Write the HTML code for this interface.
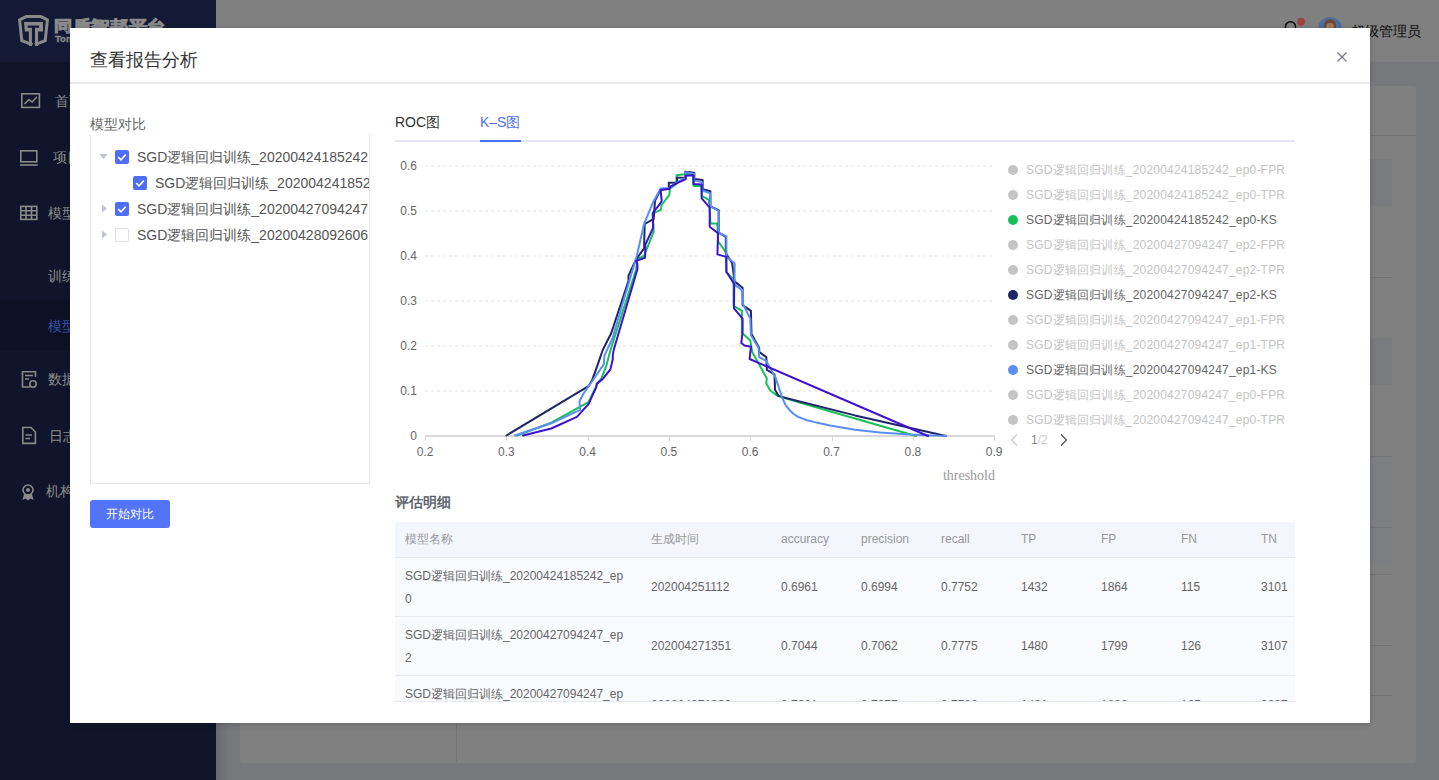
<!DOCTYPE html>
<html><head><meta charset="utf-8">
<style>
*{margin:0;padding:0;box-sizing:border-box}
html,body{width:1439px;height:780px;overflow:hidden;background:#77787c;font-family:"Liberation Sans",sans-serif;position:relative}
.a{position:absolute}
.t{position:absolute;white-space:nowrap;line-height:1}
#side{left:0;top:0;width:216px;height:780px;background:#10152b}
#logo{left:0;top:0;width:216px;height:62px;background:#141a36}
#hdr{left:216px;top:0;width:1223px;height:62px;background:#808080}
#card{left:240px;top:86px;width:1176px;height:677px;background:#808080;border-radius:3px}
#modal{left:70px;top:28px;width:1300px;height:695px;background:#fff;box-shadow:0 1px 6px rgba(0,0,0,.2)}
.mi{color:#8c8c8c;font-size:14px}
.cb{position:absolute;width:14px;height:14px;border-radius:2px;background:#4e6ef5}
.cb svg{position:absolute;left:0;top:0}
.cbe{position:absolute;width:14px;height:14px;border-radius:2px;border:1px solid #dcdfe6;background:#fff}
.tr{font-size:14px;color:#555}
.lg{font-size:12px;color:#c4c4c4;letter-spacing:0.2px}
.dot{position:absolute;width:10px;height:10px;border-radius:5px;background:#c4c4c4}
.th{font-size:12px;color:#999}
.td{font-size:12px;color:#666}
svg text{font-family:"Liberation Sans",sans-serif}
</style></head>
<body>
<div id="side" class="a"></div>
<div id="logo" class="a"></div>

<svg class="a" style="left:0;top:0" width="216" height="780" viewBox="0 0 216 780">
 <g fill="none" stroke="#8a8a8a" stroke-width="3" stroke-linejoin="miter">
  <path d="M32.5,44.6 L21.8,40.6 L19.6,19.8 L26.2,16.6 L40.8,16.6 L47.4,19.8 L45.2,40.6 L34.8,44.6"/>
 </g>
 <path fill="#8a8a8a" d="M24,22 L43,22 L43,31.5 L38.1,31.5 L38.1,46 L35,46 L35,27.7 L39.1,27.7 L39.1,25.4 L27.6,25.4 L27.6,27.7 L31.9,27.7 L31.9,46 L28.9,46 L28.9,31.5 L24.8,31.5 Z"/>
 <g fill="none" stroke="#8a8a8a" stroke-width="1.6">
  <rect x="21.8" y="93.8" width="17.6" height="13.6"/>
  <path d="M24.5,104 L29,99.5 L32,102 L37,97"/>
  <rect x="20.8" y="150.8" width="16" height="11"/>
  <path d="M20,165 L37.7,165"/>
  <rect x="20.8" y="206.4" width="16" height="13"/>
  <path d="M20.8,210.8 L36.8,210.8 M20.8,215.2 L36.8,215.2 M26,206.4 L26,219.4 M31.5,206.4 L31.5,219.4"/>
  <path d="M35.5,377 L35.5,371.8 L22.5,371.8 L22.5,387 L30,387 M25,375.5 L33,375.5 M25,379 L29,379"/>
  <circle cx="33" cy="384" r="3.2"/>
  <path d="M22.8,427.5 L31,427.5 L35.4,432 L35.4,443.4 L22.8,443.4 Z M25.5,435 L32,435 M25.5,438.5 L30,438.5"/>
  <circle cx="28" cy="490" r="5"/>
 </g>
 <circle cx="28" cy="490" r="2" fill="#8a8a8a"/>
 <path d="M24,494 L22.5,500 L25.5,498.5 L28,500.5 L30.5,498.5 L33.5,500 L32,494" fill="#8a8a8a"/>
 <text transform="translate(54,30.5) scale(1,0.82)" x="0" y="0" font-size="18" font-weight="bold" fill="#8a8a8a" stroke="#8a8a8a" stroke-width="1.1" letter-spacing="1.2">同盾智邦平台</text>
 <text x="55" y="42" font-size="9.5" font-weight="bold" fill="#8a8a8a" stroke="#8a8a8a" stroke-width="0.4">Tongdun</text>
</svg>
<div class="a" style="left:0;top:300px;width:216px;height:50px;background:#0d1126"></div>
<div class="t mi" style="left:55px;top:94px">首页</div>
<div class="t mi" style="left:53px;top:150px">项目</div>
<div class="t mi" style="left:48px;top:206px">模型</div>
<div class="t mi" style="left:48px;top:269px">训练</div>
<div class="t mi" style="left:48px;top:319px;color:#3553a8">模型</div>
<div class="t mi" style="left:48px;top:372px">数据</div>
<div class="t mi" style="left:49px;top:429px">日志</div>
<div class="t mi" style="left:46px;top:484px">机构</div>
<div class="a" style="left:216px;top:0;width:14px;height:780px;background:linear-gradient(to right,rgba(0,0,0,.12),rgba(0,0,0,0))"></div>

<div id="hdr" class="a"></div>

<svg class="a" style="left:1280px;top:16px" width="30" height="20"><path d="M5.5,13 L5.5,10.5 A5,4.8 0 0 1 15.5,10.5 L15.5,13" fill="none" stroke="#0a0a0a" stroke-width="1.5"/><circle cx="21" cy="5.7" r="4" fill="#9b4242"/></svg>
<div class="a" style="left:1318px;top:17px;width:24px;height:24px;border-radius:12px;background:#4f6d9c;overflow:hidden"><div class="a" style="left:6px;top:2px;width:12px;height:14px;border-radius:6px 6px 4px 4px;background:#6b4a3a"></div><div class="a" style="left:8px;top:6px;width:8px;height:10px;border-radius:4px;background:#a07860"></div></div>
<div class="t" style="left:1351px;top:24px;font-size:14px;color:#0d0d0d">超级管理员</div>

<div id="card" class="a"></div>

<div class="a" style="left:240px;top:135px;width:1176px;height:1px;background:#747477"></div>
<div class="a" style="left:456px;top:135px;width:1px;height:627px;background:#747477"></div>
<div class="a" style="left:1200px;top:159px;width:192px;height:47px;background:#7a7b7f"></div>
<div class="a" style="left:1200px;top:277px;width:192px;height:1px;background:#747477"></div>
<div class="a" style="left:1200px;top:338px;width:192px;height:47px;background:#7a7b7f"></div>
<div class="a" style="left:1200px;top:456px;width:192px;height:107px;background:#7e7f82"></div>
<div class="a" style="left:1200px;top:456px;width:192px;height:1px;background:#747477"></div>
<div class="a" style="left:1200px;top:527px;width:192px;height:1px;background:#747477"></div>
<div class="a" style="left:1200px;top:574px;width:192px;height:1px;background:#747477"></div>
<div class="a" style="left:1200px;top:645px;width:192px;height:1px;background:#747477"></div>
<div class="a" style="left:1200px;top:695px;width:192px;height:1px;background:#747477"></div>

<div id="modal" class="a"></div>
<div class="t" style="left:90px;top:51px;font-size:18px;color:#333">查看报告分析</div>
<svg class="a" style="left:1337px;top:52px" width="10" height="10"><path d="M0.5,0.5 L9.5,9.5 M9.5,0.5 L0.5,9.5" stroke="#6f7480" stroke-width="1.1"/></svg>
<div class="a" style="left:70px;top:82px;width:1300px;height:2px;background:#e9e9e9"></div>

<div class="t" style="left:90px;top:117px;font-size:14px;color:#666">模型对比</div>
<div class="a" style="left:90px;top:134px;width:280px;height:350px;border:1px solid #e5e5e5;border-top:none"></div>

<div class="a" style="left:91px;top:134px;width:278px;height:349px;overflow:hidden">
 <svg class="a" style="left:8px;top:19px" width="9" height="7"><path d="M0.5,1 L8.5,1 L4.5,6z" fill="#c0c4cc"/></svg>
 <div class="cb" style="left:24px;top:16px"><svg width="14" height="14"><path d="M3.2,7.2 L6,9.8 L10.8,4.6" stroke="#fff" stroke-width="1.6" fill="none"/></svg></div>
 <div class="t tr" style="left:46px;top:16px">SGD逻辑回归训练_20200424185242</div>
 <div class="cb" style="left:42px;top:42px"><svg width="14" height="14"><path d="M3.2,7.2 L6,9.8 L10.8,4.6" stroke="#fff" stroke-width="1.6" fill="none"/></svg></div>
 <div class="t tr" style="left:64px;top:42px">SGD逻辑回归训练_20200424185242_ep0</div>
 <svg class="a" style="left:10px;top:70px" width="7" height="9"><path d="M1,0.5 L6,4.5 L1,8.5z" fill="#c0c4cc"/></svg>
 <div class="cb" style="left:24px;top:68px"><svg width="14" height="14"><path d="M3.2,7.2 L6,9.8 L10.8,4.6" stroke="#fff" stroke-width="1.6" fill="none"/></svg></div>
 <div class="t tr" style="left:46px;top:68px">SGD逻辑回归训练_20200427094247</div>
 <svg class="a" style="left:10px;top:96px" width="7" height="9"><path d="M1,0.5 L6,4.5 L1,8.5z" fill="#c0c4cc"/></svg>
 <div class="cbe" style="left:24px;top:94px"></div>
 <div class="t tr" style="left:46px;top:94px">SGD逻辑回归训练_20200428092606</div>
</div>

<div class="a" style="left:90px;top:500px;width:80px;height:28px;border-radius:3px;background:#5474f7;color:#fff;font-size:12px;line-height:28px;text-align:center">开始对比</div>

<div class="t" style="left:395px;top:115px;font-size:14px;color:#333">ROC图</div>
<div class="t" style="left:480px;top:115px;font-size:14px;color:#4e6ef5">K–S图</div>
<div class="a" style="left:395px;top:140px;width:900px;height:2px;background:#e1e5f0"></div>
<div class="a" style="left:480px;top:140px;width:41px;height:2px;background:#4e6ef5"></div>

<svg class="a" style="left:0;top:0" width="1439" height="780" viewBox="0 0 1439 780">
<g><line x1="425" y1="391" x2="995" y2="391" stroke="#e3e3e3" stroke-width="1" stroke-dasharray="3 3"/>
<line x1="425" y1="346" x2="995" y2="346" stroke="#e3e3e3" stroke-width="1" stroke-dasharray="3 3"/>
<line x1="425" y1="301" x2="995" y2="301" stroke="#e3e3e3" stroke-width="1" stroke-dasharray="3 3"/>
<line x1="425" y1="256" x2="995" y2="256" stroke="#e3e3e3" stroke-width="1" stroke-dasharray="3 3"/>
<line x1="425" y1="211" x2="995" y2="211" stroke="#e3e3e3" stroke-width="1" stroke-dasharray="3 3"/>
<line x1="425" y1="166" x2="995" y2="166" stroke="#e3e3e3" stroke-width="1" stroke-dasharray="3 3"/>
</g>
<g><line x1="425" y1="436" x2="995" y2="436" stroke="#d9d9d9" stroke-width="2"/>
<line x1="425.5" y1="436" x2="425.5" y2="441" stroke="#d9d9d9" stroke-width="1"/>
<line x1="506.5" y1="436" x2="506.5" y2="441" stroke="#d9d9d9" stroke-width="1"/>
<line x1="588.5" y1="436" x2="588.5" y2="441" stroke="#d9d9d9" stroke-width="1"/>
<line x1="669.5" y1="436" x2="669.5" y2="441" stroke="#d9d9d9" stroke-width="1"/>
<line x1="750.5" y1="436" x2="750.5" y2="441" stroke="#d9d9d9" stroke-width="1"/>
<line x1="832.5" y1="436" x2="832.5" y2="441" stroke="#d9d9d9" stroke-width="1"/>
<line x1="913.5" y1="436" x2="913.5" y2="441" stroke="#d9d9d9" stroke-width="1"/>
<line x1="994.5" y1="436" x2="994.5" y2="441" stroke="#d9d9d9" stroke-width="1"/>
</g>
<g font-size="12" fill="#666"><text x="425.0" y="456" text-anchor="middle">0.2</text>
<text x="506.3" y="456" text-anchor="middle">0.3</text>
<text x="587.6" y="456" text-anchor="middle">0.4</text>
<text x="668.9" y="456" text-anchor="middle">0.5</text>
<text x="750.2" y="456" text-anchor="middle">0.6</text>
<text x="831.5" y="456" text-anchor="middle">0.7</text>
<text x="912.8" y="456" text-anchor="middle">0.8</text>
<text x="994.1" y="456" text-anchor="middle">0.9</text>
<text x="417" y="440.3" text-anchor="end">0</text>
<text x="417" y="395.3" text-anchor="end">0.1</text>
<text x="417" y="350.3" text-anchor="end">0.2</text>
<text x="417" y="305.3" text-anchor="end">0.3</text>
<text x="417" y="260.3" text-anchor="end">0.4</text>
<text x="417" y="215.3" text-anchor="end">0.5</text>
<text x="417" y="170.3" text-anchor="end">0.6</text>
</g>
<text x="995" y="480" text-anchor="end" font-size="14" fill="#999" style="font-family:'Liberation Serif',serif">threshold</text>
<g fill="none" stroke-width="2" stroke-linejoin="round" stroke-linecap="round">
<polyline points="517.0,435.5 551.3,422.7 588.5,402.2 597.4,383.6 601.3,378.5 606.4,365.6 610.5,350.0 636.2,269.2 637.4,259.0 644.0,256.0 653.7,231.7 652.4,213.7 660.8,209.9 661.7,205.0 669.4,194.7 669.9,188.7 676.5,183.6 676.5,175.3 684.2,174.2 686.0,173.8 693.0,174.6 693.0,184.5 694.0,186.0 701.2,186.0 701.7,195.8 708.8,199.9 709.7,206.9 710.4,223.6 717.4,223.6 718.1,241.5 725.8,251.8 726.4,272.3 733.5,279.4 733.6,305.8 741.9,310.9 741.9,332.7 750.3,340.4 752.2,351.9 758.6,363.5 766.8,378.5 766.3,383.6 770.4,390.8 777.6,395.9 801.2,403.1 855.0,418.5 916.0,436.0" stroke="#16c257"/>
<polyline points="506.4,435.5 588.5,386.2 592.3,379.7 597.4,365.6 602.6,350.3 611.2,333.3 628.5,280.8 628.5,275.6 635.5,260.3 644.1,248.3 644.7,224.0 653.7,218.8 655.0,200.9 660.6,189.6 668.8,189.1 668.8,182.7 677.1,182.4 677.1,177.8 685.3,177.6 685.3,171.7 694.3,172.7 694.3,179.1 702.7,179.9 702.7,189.1 710.4,191.2 710.4,206.3 718.7,210.1 718.7,232.6 725.8,237.0 725.8,253.1 732.2,263.3 734.5,281.4 742.6,287.8 742.6,305.1 750.9,310.9 751.5,334.0 759.2,348.1 759.2,351.9 766.3,357.1 766.9,369.9 774.5,374.4 775.0,389.7 778.6,395.9 785.8,398.0 855.0,415.4 946.0,436.0" stroke="#1e2667"/>
<polyline points="514.7,435.5 551.3,423.3 580.1,409.9 579.5,401.5 583.3,393.8 592.3,381.0 603.8,364.4 604.5,355.4 612.4,338.5 636.8,255.8 644.1,224.0 653.1,202.2 660.6,188.6 669.0,188.1 676.2,183.0 685.3,177.6 685.3,172.2 694.2,173.7 694.2,180.4 702.4,182.4 702.4,190.6 710.1,193.2 710.4,206.3 718.7,210.8 718.7,232.6 726.4,236.4 726.4,256.9 734.7,263.3 734.4,284.6 742.6,290.4 742.6,303.2 750.3,318.6 750.9,335.3 758.6,348.1 759.2,357.1 766.3,360.9 775.5,377.4 779,388 782.7,399.0 785.5,404.8 788.8,409.2 793,413.5 798.1,416.9 807,420.2 816.5,422.6 830,425.6 855.0,429.8 880,432.4 910,434.6 946.0,436.0" stroke="#5b8ef5"/>
<polyline points="523.0,435.5 551.3,428.5 576.9,416.9 588.5,404.1 596.2,387.4 596.8,383.6 602.6,379.1 610.3,369.5 612.8,359.2 612.8,355.4 613.7,350.0 637.4,269.2 637.4,264.1 636.2,260.9 645.1,257.7 645.4,244.5 653.1,227.8 653.1,212.4 659.5,204.7 661.7,200.9 660.6,190.1 669.4,188.8 670.4,186.5 677.6,182.9 685.8,179.1 685.6,175.8 693.5,175.3 693.7,184.0 701.7,184.5 701.7,198.3 709.7,207.6 709.7,226.8 718.1,233.2 717.4,254.4 726.4,256.9 726.4,271.7 734.2,284.0 734.0,308.3 742.6,318.6 742.6,331.4 741.3,343.0 744.5,345.5 750.9,346.8 749.6,359.0 928.0,436.0" stroke="#3d12cf"/>
</g>
</svg>
<div class="dot" style="left:1008px;top:165px;background:#c4c4c4"></div><div class="t lg" style="left:1026px;top:164px;color:#c4c4c4">SGD逻辑回归训练_20200424185242_ep0-FPR</div>
<div class="dot" style="left:1008px;top:190px;background:#c4c4c4"></div><div class="t lg" style="left:1026px;top:189px;color:#c4c4c4">SGD逻辑回归训练_20200424185242_ep0-TPR</div>
<div class="dot" style="left:1008px;top:215px;background:#16c257"></div><div class="t lg" style="left:1026px;top:214px;color:#666">SGD逻辑回归训练_20200424185242_ep0-KS</div>
<div class="dot" style="left:1008px;top:240px;background:#c4c4c4"></div><div class="t lg" style="left:1026px;top:239px;color:#c4c4c4">SGD逻辑回归训练_20200427094247_ep2-FPR</div>
<div class="dot" style="left:1008px;top:265px;background:#c4c4c4"></div><div class="t lg" style="left:1026px;top:264px;color:#c4c4c4">SGD逻辑回归训练_20200427094247_ep2-TPR</div>
<div class="dot" style="left:1008px;top:290px;background:#1e2667"></div><div class="t lg" style="left:1026px;top:289px;color:#666">SGD逻辑回归训练_20200427094247_ep2-KS</div>
<div class="dot" style="left:1008px;top:315px;background:#c4c4c4"></div><div class="t lg" style="left:1026px;top:314px;color:#c4c4c4">SGD逻辑回归训练_20200427094247_ep1-FPR</div>
<div class="dot" style="left:1008px;top:340px;background:#c4c4c4"></div><div class="t lg" style="left:1026px;top:339px;color:#c4c4c4">SGD逻辑回归训练_20200427094247_ep1-TPR</div>
<div class="dot" style="left:1008px;top:365px;background:#5b8ef5"></div><div class="t lg" style="left:1026px;top:364px;color:#666">SGD逻辑回归训练_20200427094247_ep1-KS</div>
<div class="dot" style="left:1008px;top:390px;background:#c4c4c4"></div><div class="t lg" style="left:1026px;top:389px;color:#c4c4c4">SGD逻辑回归训练_20200427094247_ep0-FPR</div>
<div class="dot" style="left:1008px;top:415px;background:#c4c4c4"></div><div class="t lg" style="left:1026px;top:414px;color:#c4c4c4">SGD逻辑回归训练_20200427094247_ep0-TPR</div>

<svg class="a" style="left:1008px;top:433px" width="12" height="14"><path d="M9,1.5 L3.5,7 L9,12.5" fill="none" stroke="#ccc" stroke-width="1.3"/></svg>
<div class="t" style="left:1031px;top:434px;font-size:12px;color:#888">1<span style="color:#ccc">/2</span></div>
<svg class="a" style="left:1058px;top:433px" width="12" height="14"><path d="M3,1.5 L8.5,7 L3,12.5" fill="none" stroke="#555" stroke-width="1.3"/></svg>

<div class="t" style="left:395px;top:495px;font-size:14px;color:#555a63;-webkit-text-stroke:0.45px #555a63">评估明细</div>
<div class="a" style="left:395px;top:522px;width:900px;height:35px;background:#f3f6fd"></div>
<div class="t th" style="left:405px;top:533px">模型名称</div>
<div class="t th" style="left:651px;top:533px">生成时间</div>
<div class="t th" style="left:781px;top:533px">accuracy</div>
<div class="t th" style="left:861px;top:533px">precision</div>
<div class="t th" style="left:941px;top:533px">recall</div>
<div class="t th" style="left:1021px;top:533px">TP</div>
<div class="t th" style="left:1101px;top:533px">FP</div>
<div class="t th" style="left:1181px;top:533px">FN</div>
<div class="t th" style="left:1261px;top:533px">TN</div>
<div class="a" style="left:395px;top:557px;width:900px;height:144px;overflow:hidden;background:#f9fafd">
<div class="a" style="left:0;top:0px;width:900px;height:1px;background:#e6e9f2"></div>
<div class="t td" style="left:10px;top:13px">SGD逻辑回归训练_20200424185242_ep</div>
<div class="t td" style="left:10px;top:36px">0</div>
<div class="t td" style="left:256px;top:24px">202004251112</div>
<div class="t td" style="left:386px;top:24px">0.6961</div>
<div class="t td" style="left:466px;top:24px">0.6994</div>
<div class="t td" style="left:546px;top:24px">0.7752</div>
<div class="t td" style="left:626px;top:24px">1432</div>
<div class="t td" style="left:706px;top:24px">1864</div>
<div class="t td" style="left:786px;top:24px">115</div>
<div class="t td" style="left:866px;top:24px">3101</div>
<div class="a" style="left:0;top:59px;width:900px;height:1px;background:#e6e9f2"></div>
<div class="t td" style="left:10px;top:72px">SGD逻辑回归训练_20200427094247_ep</div>
<div class="t td" style="left:10px;top:95px">2</div>
<div class="t td" style="left:256px;top:83px">202004271351</div>
<div class="t td" style="left:386px;top:83px">0.7044</div>
<div class="t td" style="left:466px;top:83px">0.7062</div>
<div class="t td" style="left:546px;top:83px">0.7775</div>
<div class="t td" style="left:626px;top:83px">1480</div>
<div class="t td" style="left:706px;top:83px">1799</div>
<div class="t td" style="left:786px;top:83px">126</div>
<div class="t td" style="left:866px;top:83px">3107</div>
<div class="a" style="left:0;top:118px;width:900px;height:1px;background:#e6e9f2"></div>
<div class="t td" style="left:10px;top:131px">SGD逻辑回归训练_20200427094247_ep</div>
<div class="t td" style="left:10px;top:154px">1</div>
<div class="t td" style="left:256px;top:142px">202004271330</div>
<div class="t td" style="left:386px;top:142px">0.7061</div>
<div class="t td" style="left:466px;top:142px">0.7077</div>
<div class="t td" style="left:546px;top:142px">0.7786</div>
<div class="t td" style="left:626px;top:142px">1491</div>
<div class="t td" style="left:706px;top:142px">1832</div>
<div class="t td" style="left:786px;top:142px">125</div>
<div class="t td" style="left:866px;top:142px">3097</div>
</div>
<div class="a" style="left:395px;top:701px;width:900px;height:1px;background:#e6e9f2"></div>

</body></html>
